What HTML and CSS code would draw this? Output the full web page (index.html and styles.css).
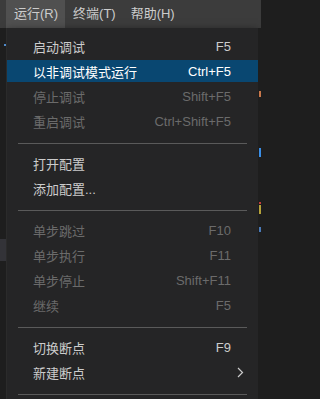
FILE: index.html
```html
<!DOCTYPE html>
<html lang="zh-CN">
<head>
<meta charset="utf-8">
<link rel="stylesheet" href="styles.css">
</head>
<body>
<div class="menubar">
  <div class="mb-item active">运行(R)</div>
  <div class="mb-item">终端(T)</div>
  <div class="mb-item">帮助(H)</div>
</div>
<div class="below">
  <div class="gutter">
    <span class="dot"></span>
    <span class="thumb"></span>
  </div>
  <div class="menu">
    <div class="item"><span class="label">启动调试</span><span class="key">F5</span></div>
    <div class="item selected"><span class="label">以非调试模式运行</span><span class="key">Ctrl+F5</span></div>
    <div class="item disabled"><span class="label">停止调试</span><span class="key">Shift+F5</span></div>
    <div class="item disabled"><span class="label">重启调试</span><span class="key">Ctrl+Shift+F5</span></div>
    <div class="sep"></div>
    <div class="item"><span class="label">打开配置</span></div>
    <div class="item"><span class="label">添加配置...</span></div>
    <div class="sep"></div>
    <div class="item disabled"><span class="label">单步跳过</span><span class="key">F10</span></div>
    <div class="item disabled"><span class="label">单步执行</span><span class="key">F11</span></div>
    <div class="item disabled"><span class="label">单步停止</span><span class="key">Shift+F11</span></div>
    <div class="item disabled"><span class="label">继续</span><span class="key">F5</span></div>
    <div class="sep"></div>
    <div class="item"><span class="label">切换断点</span><span class="key">F9</span></div>
    <div class="item"><span class="label">新建断点</span><svg class="chev" width="7" height="11" viewBox="0 0 7 11"><path d="M1 1 L5.5 5.5 L1 10" fill="none" stroke="#cccccc" stroke-width="1.2"/></svg></div>
    <div class="sep"></div>
  </div>
  <div class="strip">
    <span class="frag f-orange"></span>
    <span class="frag f-blue"></span>
    <span class="frag f-red"></span>
    <span class="frag f-yellow"></span>
    <span class="frag f-blue2"></span>
  </div>
</div>
</body>
</html>
```

FILE: styles.css
```css
* { box-sizing: border-box; }
html, body {
  margin: 0;
  padding: 0;
  background: #1e1e1e;
}
body {
  width: 261px;
  height: 399px;
  overflow: hidden;
  font-family: "Liberation Sans", "Noto Sans CJK SC", sans-serif;
  font-size: 13px;
  color: #cccccc;
}
.menubar {
  height: 28px;
  background: #3c3c3c;
  display: flex;
  padding-left: 6px;
}
.mb-item {
  padding: 0 7px 0 8px;
  line-height: 28px;
  color: #cccccc;
  white-space: nowrap;
}
.mb-item.active { background: #505050; }
.below {
  display: flex;
  height: 371px;
}
.gutter {
  width: 7px;
  flex: none;
  position: relative;
  background: #1e1e1e;
  border-right: 1px solid #2b2b2b;
}
.dot {
  position: absolute;
  left: 4px;
  top: 16px;
  width: 2px;
  height: 2px;
  background: #4f8ac9;
}
.thumb {
  position: absolute;
  left: 0;
  top: 211px;
  width: 6px;
  height: 22px;
  background: #333338;
}
.menu {
  width: 251px;
  flex: none;
  display: flex;
  flex-direction: column;
  background: #252526;
  padding-top: 6px;
  box-shadow: 0 2px 8px rgba(0,0,0,0.5);
}
.item {
  height: 22px;
  flex: none;
  margin: 1px 0 2px;
  display: flex;
  align-items: center;
  padding: 0 27px 0 26px;
  color: #cccccc;
  white-space: nowrap;
}
.item .label { flex: 1; }
.item.selected { background: #094771; color: #ffffff; }
.item.disabled { color: #6b6b6b; }
.chev { margin-right: -13px; }
.sep {
  height: 1px;
  flex: none;
  margin: 9px 11px 7px;
  background: #5a5a5a;
}
.strip {
  width: 3px;
  flex: none;
  position: relative;
  background: #1e1e1e;
}
.frag { position: absolute; left: 1px; width: 2px; }
.f-orange { top: 63px; height: 6px; background: #c8774a; }
.f-blue { top: 120px; height: 9px; background: #3a8ee6; }
.f-red { top: 174px; height: 2px; background: #c23c3c; }
.f-yellow { top: 177px; height: 9px; background: #b5a23a; }
.f-blue2 { top: 199px; height: 5px; background: #4a7ab8; }
```
